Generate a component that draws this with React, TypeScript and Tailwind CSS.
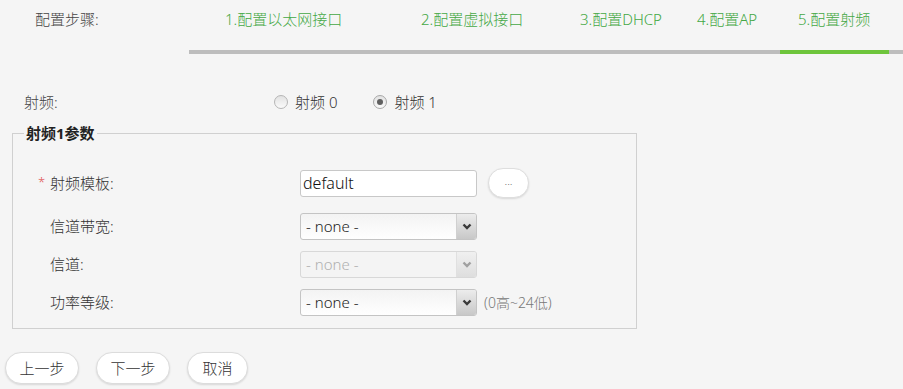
import React from "react";

const font = { fontFamily: '"Noto Sans", "Noto Sans CJK SC", sans-serif' };

function Chevron({ light }: { light?: boolean }) {
  return (
    <svg width="10" height="7" viewBox="0 0 10 7">
      <polyline
        points="1.5,1.5 5,5 8.5,1.5"
        fill="none"
        stroke={light ? "#a0a0a0" : "#3a3a3a"}
        strokeWidth="2.4"
      />
    </svg>
  );
}

function FakeSelect({ disabled }: { disabled?: boolean }) {
  return (
    <div
      className={
        "flex h-[27px] w-[177px] overflow-hidden rounded-[3px] border " +
        (disabled
          ? "border-[#d8d8d8] bg-[#f4f4f4]"
          : "border-[#c4c4c4] bg-gradient-to-b from-[#f3f3f3] to-white")
      }
    >
      <span
        className={
          "flex flex-1 items-center pl-[5px] text-[15px] " +
          (disabled ? "text-[#b0b0b0]" : "text-[#222]")
        }
      >
        - none -
      </span>
      <span
        className={
          "flex w-[20px] items-center justify-center border-l " +
          (disabled
            ? "border-[#e0e0e0] bg-gradient-to-b from-[#f0f0f0] to-[#dedede]"
            : "border-[#d0d0d0] bg-gradient-to-b from-[#ececec] to-[#c8c8c8]")
        }
      >
        <Chevron light={disabled} />
      </span>
    </div>
  );
}

const steps = [
  { t: "1.配置以太网接口", w: "w-[189px]", pl: "pl-[36px]" },
  { t: "2.配置虚拟接口", w: "w-[169px]", pl: "pl-[43px]" },
  { t: "3.配置DHCP", w: "w-[128px]", pl: "pl-[33px]" },
  { t: "4.配置AP", w: "w-[106px]", pl: "pl-[22px]" },
  { t: "5.配置射频", w: "w-[108px]", pl: "pl-[17px]" },
];

function PillButton({ children, w }: { children: React.ReactNode; w: string }) {
  return (
    <button
      className={
        "flex h-[32px] items-center justify-center rounded-full border border-[#dcdcdc] bg-white text-[15px] font-light text-[#333] shadow-[0_1px_2px_rgba(0,0,0,0.12)] " +
        w
      }
    >
      {children}
    </button>
  );
}

export default function App() {
  return (
    <div className="h-[389px] w-[903px] overflow-hidden bg-[#f5f5f5] text-[15px] font-light text-[#333]" style={font}>
      {/* Header steps */}
      <div className="flex pt-[9px]">
        <div className="w-[189px] pl-[35px] leading-[20px] text-[#444]">配置步骤:</div>
        <div className="flex flex-1 flex-col">
          <div className="flex">
            {steps.map((s) => (
              <div key={s.t} className={"flex flex-col " + s.w}>
                <div className={"leading-[20px] text-[#44a844] " + s.pl}>{s.t}</div>
              </div>
            ))}
          </div>
          <div className="mt-[21px] flex h-[4px] bg-[#bdbdbd]">
            <div className="w-[591px]" />
            <div className="w-[109px] bg-[#6ec53c]" />
          </div>
        </div>
      </div>

      {/* Radio row */}
      <div className="mt-[38px] flex h-[20px] items-center pl-[24px]">
        <div className="w-[250px] text-[#444]">射频:</div>
        <label className="flex items-center">
          <span className="h-[14px] w-[14px] rounded-full border border-[#b5b5b5] bg-gradient-to-b from-[#e2e2e2] to-[#fafafa]" />
          <span className="ml-[7px]">射频 0</span>
        </label>
        <label className="ml-[36px] flex items-center">
          <span className="flex h-[14px] w-[14px] items-center justify-center rounded-full border border-[#a8a8a8] bg-gradient-to-b from-[#e2e2e2] to-[#fafafa]">
            <span className="h-[6px] w-[6px] rounded-full bg-[#606060]" />
          </span>
          <span className="ml-[7px]">射频 1</span>
        </label>
      </div>

      {/* Fieldset */}
      <fieldset className="ml-[12px] mt-[11px] w-[625px] border border-[#d0d0d0] px-[11px] pb-[7px]">
        <legend className="px-[2px] text-[15px] font-bold leading-[20px] text-[#222]">射频1参数</legend>
        <div className="mt-[21px] flex h-[38px] items-center">
          <span className="ml-[14px] w-[12px] text-[13px] text-[#e05050]">*</span>
          <span className="w-[250px]">射频模板:</span>
          <div className="flex h-[27px] w-[177px] items-center rounded-[3px] border border-[#c8c8c8] bg-white pl-[2px] text-[16px] text-[#111]">
            default
          </div>
          <button className="ml-[11px] flex h-[30px] w-[41px] items-center justify-center rounded-full border border-[#dedede] bg-white pb-[4px] text-[11px] text-[#666] shadow-[0_1px_2px_rgba(0,0,0,0.12)]">
            ...
          </button>
        </div>
        <div className="mt-[5px] flex h-[38px] items-center">
          <span className="ml-[26px] w-[250px]">信道带宽:</span>
          <FakeSelect />
        </div>
        <div className="flex h-[38px] items-center">
          <span className="ml-[26px] w-[250px]">信道:</span>
          <FakeSelect disabled />
        </div>
        <div className="flex h-[38px] items-center">
          <span className="ml-[26px] w-[250px]">功率等级:</span>
          <FakeSelect />
          <span className="ml-[7px] text-[14px] text-[#777]">(0高~24低)</span>
        </div>
      </fieldset>

      {/* Buttons */}
      <div className="ml-[5px] mt-[23px] flex gap-[17px]">
        <PillButton w="w-[74px]">上一步</PillButton>
        <PillButton w="w-[74px]">下一步</PillButton>
        <PillButton w="w-[61px]">取消</PillButton>
      </div>
    </div>
  );
}
